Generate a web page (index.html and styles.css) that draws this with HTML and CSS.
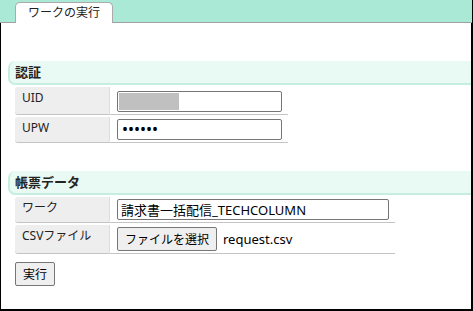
FILE: index.html
```html
<!DOCTYPE html>
<html lang="ja">
<head>
  <meta charset="UTF-8" />
  <meta name="viewport" content="width=device-width, initial-scale=1.0"/>
  <link rel="stylesheet" href="styles.css">
</head>
<body>
  <div class="page">
    <div class="tab-bar">
      <div class="tab">ワークの実行</div>
    </div>

    <div class="content">
      <h2 class="section-title">認証</h2>
      <table class="form-table">
        <tr>
          <th>UID</th>
          <td>
            <span class="field">
              <input type="text" class="text-input uid-input" value="">
              <span class="mask"></span>
            </span>
          </td>
        </tr>
        <tr>
          <th>UPW</th>
          <td><input type="password" class="text-input uid-input pw-input" value="secret"></td>
        </tr>
      </table>

      <h2 class="section-title second">帳票データ</h2>
      <table class="form-table">
        <tr>
          <th>ワーク</th>
          <td><input type="text" class="text-input work-input" value="請求書一括配信_TECHCOLUMN"></td>
        </tr>
        <tr>
          <th>CSVファイル</th>
          <td>
            <div class="file-row">
              <button class="btn file-btn">ファイルを選択</button>
              <span class="file-name">request.csv</span>
            </div>
          </td>
        </tr>
      </table>

      <button class="btn run-btn">実行</button>
    </div>
  </div>
</body>
</html>
```

FILE: styles.css
```css
* {
  box-sizing: border-box;
}

body {
  margin: 0;
  padding: 0;
  font-family: "Noto Sans", "Noto Sans CJK JP", sans-serif;
  color: #222;
  background-color: #fff;
}

.page {
  width: 473px;
  border-right: 1px solid #000;
}

.tab-bar {
  height: 23px;
  background-color: #aae9d5;
  border-bottom: 1px solid #a0a0a0;
  display: flex;
  align-items: flex-end;
  padding-left: 15px;
}

.tab {
  width: 98px;
  height: 21px;
  margin-bottom: -1px;
  background-color: #fff;
  border: 1px solid #aaa;
  border-bottom: none;
  border-radius: 5px 5px 0 0;
  font-size: 12px;
  line-height: 19px;
  text-align: center;
}

.content {
  height: 288px;
  border-left: 1px solid #000;
  border-right: 1px solid #000;
  border-bottom: 2px solid #000;
  padding: 38px 0 0 7px;
}

.section-title {
  margin: 0;
  height: 24px;
  padding: 2px 0 0 5px;
  font-size: 13px;
  font-weight: bold;
  line-height: 18px;
  background-color: #e9f9f3;
  border-left: 2px solid #c4efdf;
  border-bottom: 2px solid #c4efdf;
  border-radius: 7px 0 0 7px;
}

.section-title.second {
  margin-top: 26px;
}

.form-table {
  border-collapse: separate;
  border-spacing: 0 2px;
  margin: 0 0 0 7px;
}

.form-table th {
  width: 95px;
  padding: 2px 7px 2px 7px;
  font-size: 12px;
  font-weight: normal;
  line-height: 17px;
  text-align: left;
  white-space: nowrap;
  vertical-align: top;
  background-color: #eee;
  border-right: 1px solid #ddd;
  border-bottom: 1px solid #c4c4c4;
  border-radius: 3px 0 0 3px;
}

.form-table td {
  padding: 2px 6px 2px 7px;
  border-bottom: 1px solid #c4c4c4;
  vertical-align: top;
}

.field {
  position: relative;
  display: inline-block;
}

.text-input {
  display: block;
  height: 21px;
  padding: 0 3px;
  font-family: "Noto Sans", "Noto Sans CJK JP", sans-serif;
  font-size: 13px;
  color: #000;
  border: 1px solid #767676;
  border-radius: 2px;
  background-color: #fff;
}

.uid-input {
  width: 165px;
}

.pw-input {
  font-size: 16px;
  padding-left: 4px;
}

.work-input {
  width: 272px;
}

.mask {
  position: absolute;
  left: 2px;
  top: 2px;
  width: 60px;
  height: 17px;
  background-color: #c0c0c0;
}

.file-row {
  display: flex;
  align-items: center;
  gap: 6px;
}

.btn {
  font-family: "Noto Sans", "Noto Sans CJK JP", sans-serif;
  font-size: 12px;
  color: #000;
  height: 24px;
  padding: 0 6px;
  background-color: #efefef;
  border: 1px solid #767676;
  border-radius: 2px;
}

.file-btn {
  width: 100px;
}

.file-name {
  font-size: 13px;
  color: #000;
}

.run-btn {
  display: block;
  width: 40px;
  margin: 6px 0 0 7px;
}
```
